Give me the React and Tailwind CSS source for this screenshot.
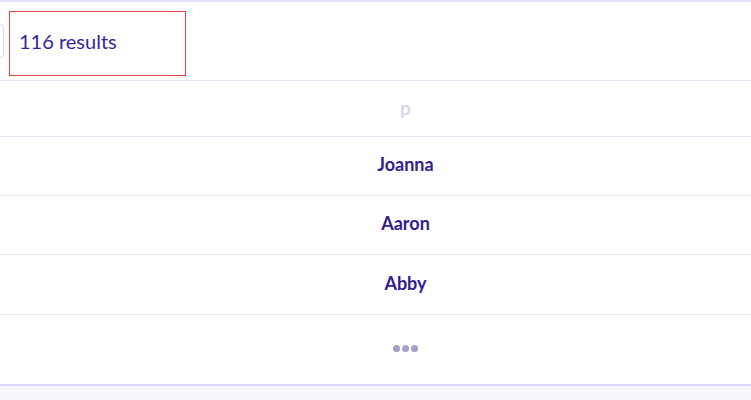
export default function App() {
  const rows = ["Joanna", "Aaron", "Abby"];
  return (
    <div className="w-[751px] h-[400px] overflow-hidden bg-[#f8f7fe] font-['Lato','Noto_Sans',sans-serif]">
      <div className="bg-white">
        <div className="h-[2px] bg-[#e4e0fa]" />
        <div className="relative h-[79px] border-b border-[#e8e6f4]">
          <div className="absolute left-[-20px] top-[22px] w-[24px] h-[34px] rounded-[4px] border border-[#dcd7f8]" />
          <div className="absolute left-[9px] top-[9px] w-[177px] h-[65px] border border-[#e53e3e] bg-white flex items-center pl-[9px] pb-[6px]">
            <span className="text-[20px] text-[#3a1f9e]">116 results</span>
          </div>
        </div>
        <div className="h-[56px] border-b border-[#e8e6f4] flex items-center justify-center pl-[60px]">
          <span className="text-[19px] font-bold text-[#d9d5ee]">p</span>
        </div>
        {rows.map((n, i) => (
          <div key={n} className={`${i === 2 ? "h-[60px]" : "h-[59px]"} border-b border-[#e8e6f4] flex items-center justify-center pl-[60px] pb-[3px]`}>
            <span className="text-[18px] font-bold text-[#331c94]">{n}</span>
          </div>
        ))}
        <div className="h-[71px] border-b-2 border-[#dcd6fa] flex items-center justify-center pl-[60px] pb-[2px]">
          <div className="flex gap-[2px]">
            <span className="w-[7px] h-[7px] rounded-full bg-[#a59fc9]" />
            <span className="w-[7px] h-[7px] rounded-full bg-[#a59fc9]" />
            <span className="w-[7px] h-[7px] rounded-full bg-[#a59fc9]" />
          </div>
        </div>
      </div>
    </div>
  );
}
